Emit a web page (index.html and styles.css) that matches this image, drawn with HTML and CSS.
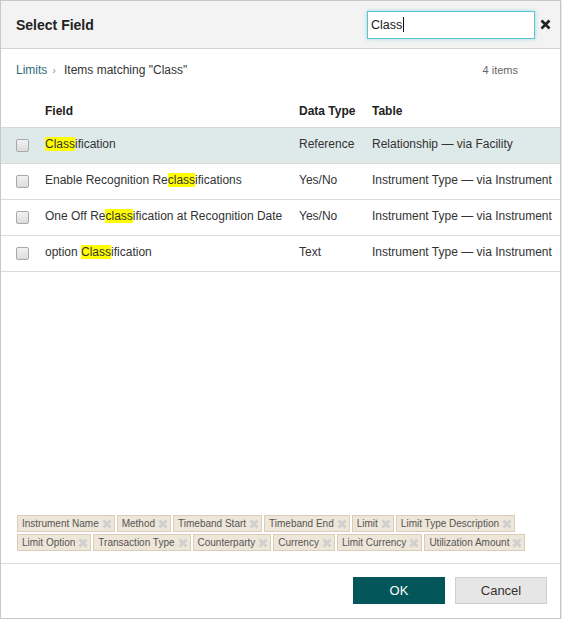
FILE: index.html
```html
<!DOCTYPE html>
<html>
<head>
<meta charset="utf-8">
<link rel="stylesheet" href="styles.css">
</head>
<body>
<div class="dialog">
  <div class="header">
    <div class="title">Select Field</div>
    <div class="search-wrap">
      <div class="search">Class<span class="caret"></span></div>
      <svg class="close" width="11" height="11" viewBox="0 0 11 11"><path d="M1.5 1.5L9.5 9.5M9.5 1.5L1.5 9.5" stroke="#222" stroke-width="2.6"/></svg>
    </div>
  </div>
  <div class="body">
    <div class="crumbs">
      <div class="crumb-left"><span class="crumb-link">Limits</span><span class="sep">›</span><span class="crumb-cur">Items matching "Class"</span></div>
      <div class="count">4 items</div>
    </div>
    <div class="table">
      <div class="row head">
        <div></div><div>Field</div><div>Data Type</div><div>Table</div>
      </div>
      <div class="row sel">
        <div class="cb-cell"><span class="cb"></span></div><div><mark>Class</mark>ification</div><div>Reference</div><div>Relationship — via Facility</div>
      </div>
      <div class="row">
        <div class="cb-cell"><span class="cb"></span></div><div>Enable Recognition Re<mark>class</mark>ifications</div><div>Yes/No</div><div>Instrument Type — via Instrument</div>
      </div>
      <div class="row">
        <div class="cb-cell"><span class="cb"></span></div><div>One Off Re<mark>class</mark>ification at Recognition Date</div><div>Yes/No</div><div>Instrument Type — via Instrument</div>
      </div>
      <div class="row">
        <div class="cb-cell"><span class="cb"></span></div><div>option <mark>Class</mark>ification</div><div>Text</div><div>Instrument Type — via Instrument</div>
      </div>
    </div>
    <div class="tags">
      <span class="tag">Instrument Name<svg viewBox="0 0 10 10"><path d="M1.5 1.5L8.5 8.5M8.5 1.5L1.5 8.5"/></svg></span><span class="tag">Method<svg viewBox="0 0 10 10"><path d="M1.5 1.5L8.5 8.5M8.5 1.5L1.5 8.5"/></svg></span><span class="tag">Timeband Start<svg viewBox="0 0 10 10"><path d="M1.5 1.5L8.5 8.5M8.5 1.5L1.5 8.5"/></svg></span><span class="tag">Timeband End<svg viewBox="0 0 10 10"><path d="M1.5 1.5L8.5 8.5M8.5 1.5L1.5 8.5"/></svg></span><span class="tag">Limit<svg viewBox="0 0 10 10"><path d="M1.5 1.5L8.5 8.5M8.5 1.5L1.5 8.5"/></svg></span><span class="tag">Limit Type Description<svg viewBox="0 0 10 10"><path d="M1.5 1.5L8.5 8.5M8.5 1.5L1.5 8.5"/></svg></span><span class="tag">Limit Option<svg viewBox="0 0 10 10"><path d="M1.5 1.5L8.5 8.5M8.5 1.5L1.5 8.5"/></svg></span><span class="tag">Transaction Type<svg viewBox="0 0 10 10"><path d="M1.5 1.5L8.5 8.5M8.5 1.5L1.5 8.5"/></svg></span><span class="tag">Counterparty<svg viewBox="0 0 10 10"><path d="M1.5 1.5L8.5 8.5M8.5 1.5L1.5 8.5"/></svg></span><span class="tag">Currency<svg viewBox="0 0 10 10"><path d="M1.5 1.5L8.5 8.5M8.5 1.5L1.5 8.5"/></svg></span><span class="tag">Limit Currency<svg viewBox="0 0 10 10"><path d="M1.5 1.5L8.5 8.5M8.5 1.5L1.5 8.5"/></svg></span><span class="tag">Utilization Amount<svg viewBox="0 0 10 10"><path d="M1.5 1.5L8.5 8.5M8.5 1.5L1.5 8.5"/></svg></span>
    </div>
  </div>
  <div class="footer">
    <button class="btn ok">OK</button>
    <button class="btn cancel">Cancel</button>
  </div>
</div>
</body>
</html>
```
FILE: styles.css
```css
html, body { margin: 0; padding: 0; background: #fff; }
body { font-family: Arial, "Liberation Sans", sans-serif; color: #333; font-size: 12px; }
.dialog {
  width: 559px; height: 617px;
  border: 1px solid #c8c8c8;
  box-shadow: 0 1px 3px rgba(0,0,0,.25);
  display: flex; flex-direction: column;
  background: #fff;
}
.header {
  height: 47px; background: #f3f3f3; border-bottom: 1px solid #d4d4d4;
  display: flex; align-items: center; justify-content: space-between;
  padding: 0 9px 0 15px; flex: none;
}
.title { font-size: 14px; font-weight: bold; color: #222; margin-top: 1px; }
.search-wrap { display: flex; align-items: center; gap: 5px; }
.search {
  width: 163px; height: 26px; border: 1px solid #5bc3d2; background: #fff;
  box-shadow: 0 0 4px rgba(91,195,210,.55);
  font-size: 12.5px; color: #222; line-height: 26px; padding-left: 3px;
}
.caret { display: inline-block; width: 1px; height: 15px; background: #111; vertical-align: -3px; margin-left: 1px; }
.close { display: block; }
.body { flex: 1; display: flex; flex-direction: column; }
.crumbs { display: flex; justify-content: space-between; align-items: center; padding: 13px 42px 0 15px; height: 16px; }
.crumb-link { color: #2f6b7c; }
.sep { color: #999; font-size: 11px; margin: 0 8px 0 5px; }
.crumb-cur { color: #333; }
.count { font-size: 11px; color: #666; }
.table { margin-top: 18px; }
.row {
  display: grid; grid-template-columns: 44px 254px 73px 1fr;
  align-items: center; border-bottom: 1px solid #dcdcdc;
  white-space: nowrap; color: #333; padding-bottom: 3px; box-sizing: content-box;
  height: 32px;
}
.row.head { height: 30px; padding-bottom: 1px; font-weight: bold; color: #222; border-bottom: 1px solid #d8d8d8; }
.row.sel { background: #dee9e9; }
.cb-cell { display: flex; padding-left: 15px; padding-top: 3px; }
.cb { width: 11px; height: 11px; border: 1px solid #a8a8a8; border-radius: 2px; background: linear-gradient(#f2f2f2, #dcdcdc); }
mark { background: #ffff00; color: #333; }
.tags { margin-top: auto; padding: 0 30px 12px 16px; display: flex; flex-wrap: wrap; gap: 2px 2px; }
.tag {
  display: inline-flex; align-items: center; height: 15px;
  background: #efe6da; border: 1px solid #dacdb9; color: #555;
  font-size: 10px; padding: 0 2px 0 4px;
}
.tag svg { width: 10px; height: 10px; margin-left: 3px; }
.tag svg path { stroke: #d0d0d0; stroke-width: 3; fill: none; }
.footer {
  flex: none; height: 55px; border-top: 1px solid #dcdcdc;
  display: flex; justify-content: flex-end; align-items: flex-start; gap: 10px;
  padding: 13px 13px 0 0; box-sizing: border-box;
}
.btn { width: 92px; height: 27px; font-family: Arial, "Liberation Sans", sans-serif; font-size: 13px; border-radius: 0; cursor: pointer; }
.ok { background: #03575a; color: #fff; border: 1px solid #03575a; }
.cancel { background: #e6e6e6; color: #333; border: 1px solid #cfcfcf; }
```
